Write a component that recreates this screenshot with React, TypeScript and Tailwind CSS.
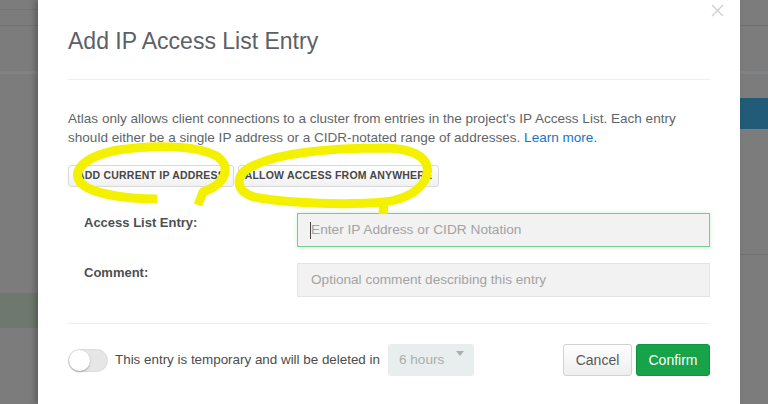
import React from "react";

const font = { fontFamily: '"Liberation Sans", Arial, sans-serif' };

function LeftStrip() {
  return (
    <div className="w-[38px] h-full flex flex-col bg-[#7c7c7c] shrink-0">
      <div className="h-[10px] border-b border-[#747474]" />
      <div className="h-[16px] border-b border-[#727272]" />
      <div className="h-[45px]" />
      <div className="h-[3px] bg-[#808487]" />
      <div className="h-[219px]" />
      <div className="h-[35px] bg-[#6f786f]" />
      <div className="flex-1" />
    </div>
  );
}

function RightStrip() {
  return (
    <div className="w-[28px] h-full flex flex-col bg-[#7c7c7c] shrink-0">
      <div className="h-[26px] border-b border-[#707070]" />
      <div className="h-[45px]" />
      <div className="h-[3px] bg-[#7f8488]" />
      <div className="h-[24px]" />
      <div className="h-[31px] bg-[#215b77]" />
      <div className="h-[126px] border-b border-[#717171]" />
      <div className="flex-1" />
    </div>
  );
}

function Highlights() {
  return (
    <svg
      className="absolute left-0 top-0 pointer-events-none"
      width="702"
      height="404"
      viewBox="38 0 702 404"
    >
      <path
        d="M157,199 C126,199 90,194 80,182 C71,170 86,156 118,150 C158,144 201,146 218,157 C232,168 225,184 203,192 L198,205"
        fill="none"
        stroke="#f4f100"
        strokeWidth="9"
        strokeLinecap="butt"
        strokeLinejoin="round"
      />
      <path
        d="M383,214 L384,202 C350,205 290,204 254,197 C235,191 235,176 249,168 C275,153 330,148 385,148 C421,149 433,162 425,180 C417,195 396,201 384,202"
        fill="none"
        stroke="#f4f100"
        strokeWidth="9"
        strokeLinecap="butt"
        strokeLinejoin="round"
      />
    </svg>
  );
}

export default function App() {
  return (
    <div className="w-[768px] h-[404px] overflow-hidden flex bg-[#7c7c7c]" style={font}>
      <LeftStrip />
      <div className="relative w-[702px] h-full bg-white shadow-[-3px_0_6px_rgba(0,0,0,0.25)] px-[30px] flex flex-col">
        <button className="absolute right-[16px] top-[4px] w-[13px] h-[13px]">
          <svg width="13" height="13" viewBox="0 0 13 13">
            <path d="M1,1 L12,12 M12,1 L1,12" stroke="#d0d0d0" strokeWidth="1.4" />
          </svg>
        </button>
        <h1 className="pt-[26px] h-[56px] text-[23px] leading-[30px] text-[#5b6166] font-light">
          Add IP Access List Entry
        </h1>
        <div className="mt-[23px] border-t border-[#efefef]" />
        <p className="mt-[29px] text-[13.55px] leading-[19px] text-[#5f6569]">
          Atlas only allows client connections to a cluster from entries in the project's IP Access List. Each entry
          should either be a single IP address or a CIDR-notated range of addresses.{" "}
          <span className="text-[#1a73c8]">Learn more.</span>
        </p>
        <div className="mt-[18px] flex gap-[4px]">
          <div className="w-[166px] h-[22px] flex items-center justify-center rounded-[3px] border border-[#d9d9d9] bg-gradient-to-b from-white to-[#f1f1f1] text-[10.5px] font-bold text-[#474747] tracking-[0.2px]">
            ADD CURRENT IP ADDRESS
          </div>
          <div className="w-[201px] h-[22px] flex items-center justify-center rounded-[3px] border border-[#d9d9d9] bg-gradient-to-b from-white to-[#f1f1f1] text-[10.5px] font-bold text-[#474747] tracking-[0.2px]">
            ALLOW ACCESS FROM ANYWHERE
          </div>
        </div>
        <div className="mt-[26px] flex">
          <div className="w-[229px] pl-[16px] pt-[0px] text-[13px] leading-[20px] font-bold text-[#4b4f52]">
            Access List Entry:
          </div>
          <div className="w-[413px] h-[34px] border border-[#72cf8e] bg-[#f2f2f2] flex items-center pl-[12px] shadow-[0_0_4px_rgba(114,207,142,0.35)]">
            <div className="w-px h-[17px] bg-[#444]" />
            <span className="text-[13.7px] text-[#a3a3a3]">Enter IP Address or CIDR Notation</span>
          </div>
        </div>
        <div className="mt-[16px] flex">
          <div className="w-[229px] pl-[16px] pt-[0px] text-[13px] leading-[20px] font-bold text-[#4b4f52]">
            Comment:
          </div>
          <div className="w-[413px] h-[34px] border border-[#e4e4e4] bg-[#f2f2f2] flex items-center pl-[13px]">
            <span className="text-[13.6px] text-[#a3a3a3]">Optional comment describing this entry</span>
          </div>
        </div>
        <div className="mt-[26px] border-t border-[#efefef]" />
        <div className="mt-[20px] flex items-center">
          <div className="relative w-[40px] h-[23px] rounded-full bg-[#e6e6e6] border border-[#dcdcdc]">
            <div className="absolute left-[0px] top-[0px] w-[21px] h-[21px] rounded-full bg-white shadow-[0_1px_2px_rgba(0,0,0,0.3)]" />
          </div>
          <span className="ml-[7px] text-[13.4px] text-[#494d50]">This entry is temporary and will be deleted in</span>
          <div className="ml-[8px] w-[86px] h-[32px] rounded-[3px] bg-[#e8eded] flex items-center pl-[11px] relative">
            <span className="text-[13.6px] text-[#a8afb0]">6 hours</span>
            <svg className="absolute right-[10px] top-[7px]" width="8" height="5" viewBox="0 0 8 5">
              <path d="M0,0 L8,0 L4,5 Z" fill="#a8afb0" />
            </svg>
          </div>
          <div className="flex-1" />
          <div className="w-[69px] h-[32px] rounded-[3px] border border-[#d2d2d2] bg-gradient-to-b from-white to-[#eeeeee] flex items-center justify-center text-[14px] text-[#55595c]">
            Cancel
          </div>
          <div className="ml-[4px] w-[74px] h-[32px] rounded-[3px] border border-[#10933f] bg-[#16a34a] flex items-center justify-center text-[14px] text-white">
            Confirm
          </div>
        </div>
        <Highlights />
      </div>
      <RightStrip />
    </div>
  );
}
